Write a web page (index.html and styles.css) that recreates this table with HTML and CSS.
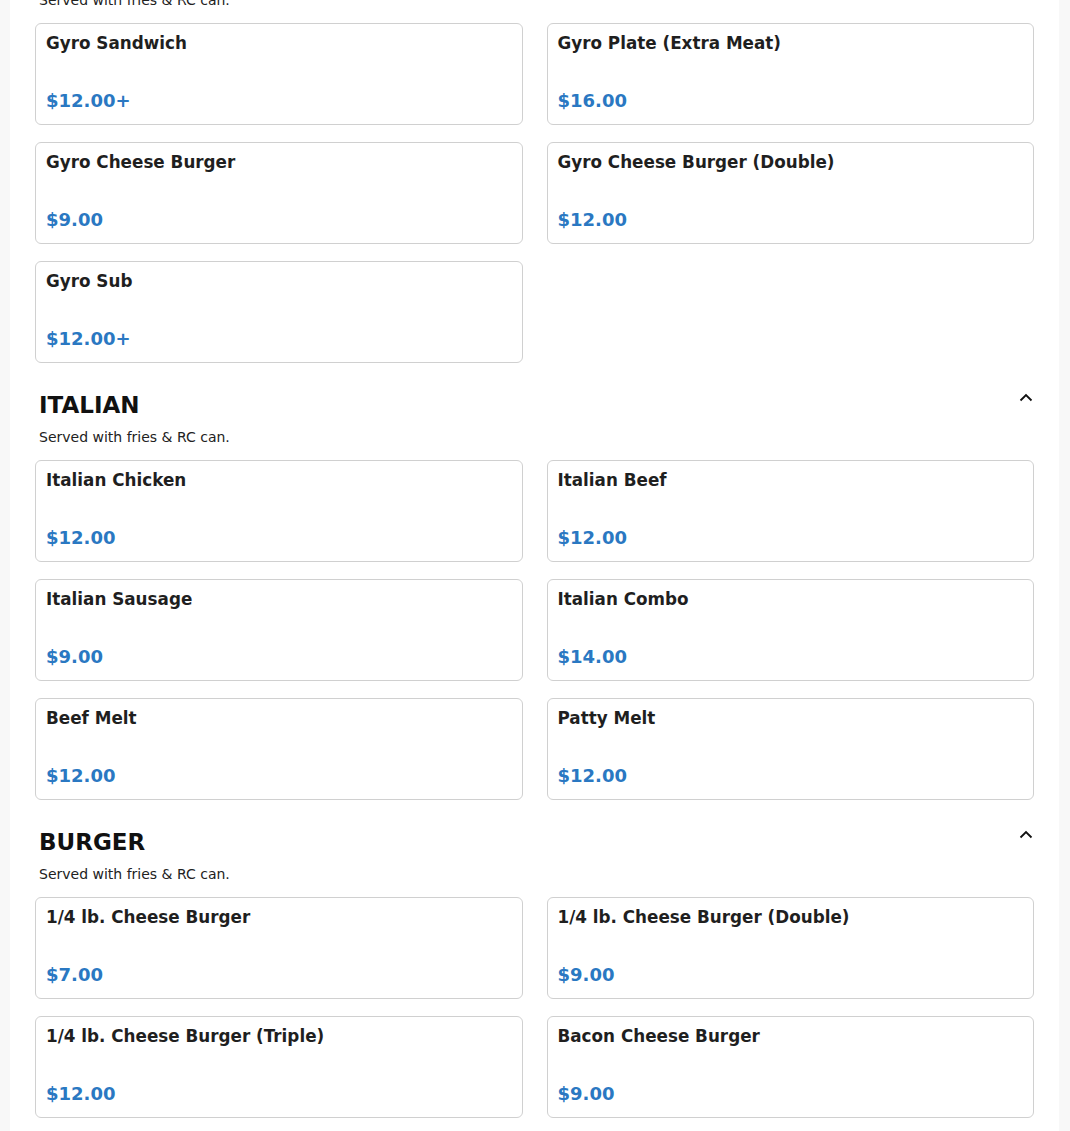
FILE: index.html
```html
<!DOCTYPE html>
<html lang="en">
<head>
<meta charset="utf-8">
<title>Menu</title>
<link rel="stylesheet" href="styles.css">
</head>
<body>
<div class="page">
  <main class="menu">
    <section class="category category-cut">
      <p class="category-note">Served with fries &amp; RC can.</p>
      <div class="items">
        <div class="item"><div class="item-name">Gyro Sandwich</div><div class="item-price">$12.00+</div></div>
        <div class="item"><div class="item-name">Gyro Plate (Extra Meat)</div><div class="item-price">$16.00</div></div>
        <div class="item"><div class="item-name">Gyro Cheese Burger</div><div class="item-price">$9.00</div></div>
        <div class="item"><div class="item-name">Gyro Cheese Burger (Double)</div><div class="item-price">$12.00</div></div>
        <div class="item"><div class="item-name">Gyro Sub</div><div class="item-price">$12.00+</div></div>
      </div>
    </section>

    <section class="category">
      <div class="category-head">
        <h2 class="category-title">ITALIAN</h2>
        <svg class="chevron" width="14" height="9" viewBox="0 0 14 9"><path d="M1.5 7.5 L7 2 L12.5 7.5" fill="none" stroke="#111" stroke-width="1.8"/></svg>
      </div>
      <p class="category-note">Served with fries &amp; RC can.</p>
      <div class="items">
        <div class="item"><div class="item-name">Italian Chicken</div><div class="item-price">$12.00</div></div>
        <div class="item"><div class="item-name">Italian Beef</div><div class="item-price">$12.00</div></div>
        <div class="item"><div class="item-name">Italian Sausage</div><div class="item-price">$9.00</div></div>
        <div class="item"><div class="item-name">Italian Combo</div><div class="item-price">$14.00</div></div>
        <div class="item"><div class="item-name">Beef Melt</div><div class="item-price">$12.00</div></div>
        <div class="item"><div class="item-name">Patty Melt</div><div class="item-price">$12.00</div></div>
      </div>
    </section>

    <section class="category">
      <div class="category-head">
        <h2 class="category-title">BURGER</h2>
        <svg class="chevron" width="14" height="9" viewBox="0 0 14 9"><path d="M1.5 7.5 L7 2 L12.5 7.5" fill="none" stroke="#111" stroke-width="1.8"/></svg>
      </div>
      <p class="category-note">Served with fries &amp; RC can.</p>
      <div class="items">
        <div class="item"><div class="item-name">1/4 lb. Cheese Burger</div><div class="item-price">$7.00</div></div>
        <div class="item"><div class="item-name">1/4 lb. Cheese Burger (Double)</div><div class="item-price">$9.00</div></div>
        <div class="item"><div class="item-name">1/4 lb. Cheese Burger (Triple)</div><div class="item-price">$12.00</div></div>
        <div class="item"><div class="item-name">Bacon Cheese Burger</div><div class="item-price">$9.00</div></div>
      </div>
    </section>
  </main>
</div>
</body>
</html>
```

FILE: styles.css
```css
html, body {
  margin: 0;
  padding: 0;
  background: #f8f8f8;
  font-family: "DejaVu Sans", "Liberation Sans", sans-serif;
  color: #1c1c1c;
}

.page {
  height: 1131px;
  overflow: hidden;
}

.menu {
  background: #ffffff;
  margin: 0 11px 0 10px;
  padding: 0 25px 40px;
  min-height: 1131px;
}

.category {
  padding-top: 28px;
}

.category-cut {
  padding-top: 0;
  margin-top: -8px;
}

.category-head {
  display: flex;
  justify-content: space-between;
  align-items: flex-start;
  padding: 0 1px 0 4px;
}

.category-title {
  margin: 0;
  font-size: 23px;
  font-weight: bold;
  color: #111;
  line-height: 28px;
}

.chevron {
  margin-top: 2px;
}

.category-note {
  margin: 10px 0 0;
  padding: 0 4px;
  font-size: 14px;
  line-height: 16px;
  color: #222;
}

.category-cut .category-note {
  margin-top: 0;
}

.items {
  display: grid;
  grid-template-columns: 1fr 1fr;
  column-gap: 24px;
  row-gap: 17px;
  margin-top: 15px;
}

.item {
  border: 1px solid #d0d0d0;
  border-radius: 6px;
  padding: 9px 10px 12px;
  display: flex;
  flex-direction: column;
  justify-content: space-between;
  box-sizing: border-box;
  height: 102px;
}

.item-name {
  font-size: 16.8px;
  font-weight: bold;
  line-height: 20px;
  color: #1f1f1f;
}

.item-price {
  font-size: 18px;
  font-weight: bold;
  line-height: 22px;
  color: #2a78c2;
}
```
